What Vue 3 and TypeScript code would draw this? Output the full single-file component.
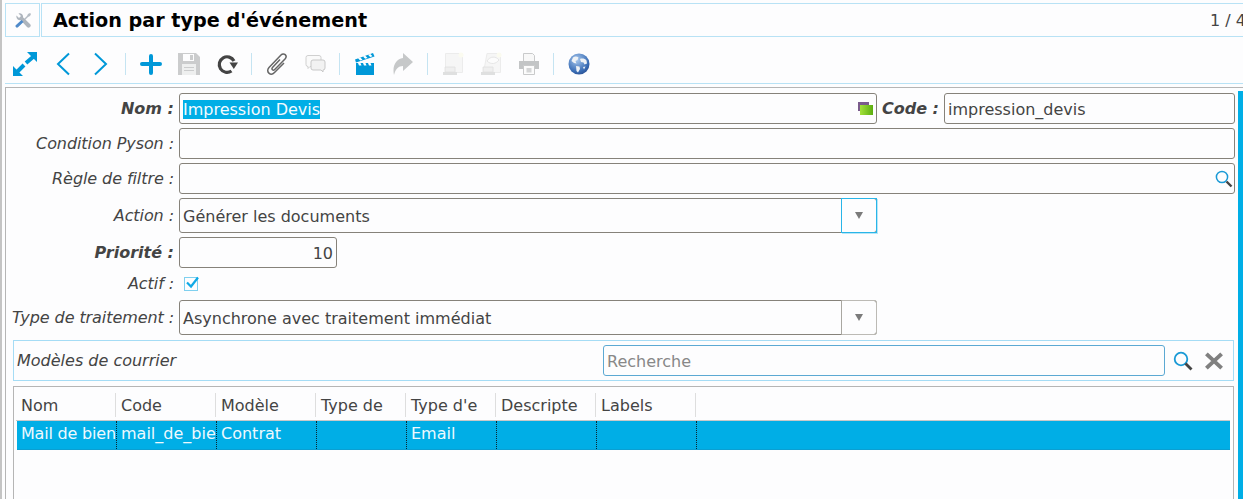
<script setup lang="ts">
const columns = [
  { name: 'Nom', width: 100, value: 'Mail de bien' },
  { name: 'Code', width: 100, value: 'mail_de_bie' },
  { name: 'Modèle', width: 100, value: 'Contrat' },
  { name: 'Type de', width: 90, value: '' },
  { name: "Type d'e", width: 90, value: 'Email' },
  { name: 'Descripte', width: 100, value: '' },
  { name: 'Labels', width: 100, value: '' },
]
</script>

<template>
  <div class="page">
    <header class="titlebar">
      <div class="tab-icon">
        <svg width="16" height="16" viewBox="0 0 16 16">
          <path d="M8 8l4-4 1-2 2-1 1 1-1 2-2 1-4 4z" fill="#b5bcc4"/>
          <path d="M1.500 3.500l2.500 2.500 2-2-2.500-2.500c2.500-.8 5 1 4.500 3.800L15 12a2 2 0 0 1-3 3L5.800 8.300C3 8.800.8 6 1.500 3.500z" fill="#aeb5bd"/>
          <path d="M1 13l5.500-5 2 2L3 15.200a1.400 1.400 0 0 1-2-2.200z" fill="#4f8aca"/>
        </svg>
      </div>
      <div class="title-box">
        <h1>Action par type d'événement</h1>
        <span class="count">1 / 4</span>
      </div>
    </header>

    <nav class="toolbar">
      <button class="tool">
        <svg width="26" height="26" viewBox="0 0 26 26"><path d="M25 1v10l-10-10zM1 25V15l10 10z" fill="#0098d8"/><path d="M14 12l7-6M5 21l7-7" stroke="#0098d8" stroke-width="4"/></svg>
      </button>
      <button class="tool">
        <svg width="16" height="24" viewBox="0 0 16 24"><path d="M14 1.500L3 12l11 10.500" fill="none" stroke="#0098d8" stroke-width="2"/></svg>
      </button>
      <button class="tool">
        <svg width="16" height="24" viewBox="0 0 16 24"><path d="M2 1.500L13 12 2 22.500" fill="none" stroke="#0098d8" stroke-width="2"/></svg>
      </button>
      <span class="sep"></span>
      <button class="tool">
        <svg width="24" height="22" viewBox="0 0 24 22"><path d="M3 11h18M12 3v17" fill="none" stroke="#0098d8" stroke-width="4" stroke-linecap="round"/></svg>
      </button>
      <button class="tool">
        <svg width="22" height="22" viewBox="0 0 22 22"><path d="M0 0h18l4 4v18H0z" fill="#cbcccd"/><path d="M5 1h11v7H5z" fill="#fdfdfe"/><path d="M12 2h3v5h-3z" fill="#cbcccd"/><path d="M4 11h14v11H4z" fill="#eeefef"/><path d="M6 14h10v1H6zM6 17h10v1H6z" fill="#cbcccd"/></svg>
      </button>
      <button class="tool">
        <svg width="22" height="22" viewBox="0 0 22 22"><path d="M15.500 18A7.800 7.800 0 1 1 18 8" fill="none" stroke="#444" stroke-width="3.200"/><path d="M13.500 9.500H22l-4.200 6.500z" fill="#444"/></svg>
      </button>
      <span class="sep"></span>
      <button class="tool">
        <svg width="24" height="24" viewBox="0 0 24 24"><path d="M15 7.500L7.500 15.500c-1.500 1.800.6 3.600 2.200 2L20 7c3-3.300-1.200-7-4-4L4 15.500c-3.800 4.200 1.700 9 5.500 5L19 11" fill="none" stroke="#666" stroke-width="1.500"/></svg>
      </button>
      <button class="tool">
        <svg width="22" height="20" viewBox="0 0 22 20"><path d="M4 1.500h11a2 2 0 0 1 2 2v7a2 2 0 0 1-2 2H6l-2 2v-2a2 2 0 0 1-2-2v-7a2 2 0 0 1 2-2z" fill="#fafafa" stroke="#d0d0d0"/><path d="M9 6h10a2 2 0 0 1 2 2v6a2 2 0 0 1-2 2v2l-2-2H9a2 2 0 0 1-2-2V8a2 2 0 0 1 2-2z" fill="#f2f2f2" stroke="#c8c8c8"/></svg>
      </button>
      <span class="sep"></span>
      <button class="tool">
        <svg width="20" height="22" viewBox="0 0 20 22"><path d="M0 6.500L18 0l1.500 3.500L1 9.500z" fill="#0098d8"/><path d="M3 5.300l2.300-.8 2.200 2.300-2.300.8zM8 3.500l2.300-.8 2.200 2.300-2.300.8zM13 1.800l2.300-.8 2.200 2.300-2.300.8z" fill="#fff"/><path d="M1 10h18v12H1z" fill="#0098d8"/><path d="M3 10h2.500l1 2.500H4zM8 10h2.500l1 2.500H9zM13 10h2.500l1 2.500H14z" fill="#fff"/></svg>
      </button>
      <button class="tool">
        <svg width="20" height="22" viewBox="0 0 20 22"><path d="M10 0l10 9-10 9v-5C5.500 13 2.500 16 1 22-1 13 3 6 10 5z" fill="#c6c8c9"/></svg>
      </button>
      <span class="sep"></span>
      <button class="tool">
        <svg width="24" height="24" viewBox="0 0 24 24"><path d="M4.500 1.500h17v19h-17z" fill="#f6f6f6" stroke="#ececec"/><circle cx="20" cy="3" r="2.500" fill="#fbfbf0"/><path d="M2 20h14v3H2z" fill="#dfe0e0"/><path d="M4 15h10v5H4z" fill="#efefef" stroke="#e0e0e0" stroke-width=".8"/></svg>
      </button>
      <button class="tool">
        <svg width="24" height="24" viewBox="0 0 24 24"><path d="M8 1.500h13.500v19H4.500z" fill="#f6f6f6" stroke="#ececec"/><path d="M8 9c3-5 9-5 12-1-3 4-8 5-12 1z" fill="#fcfcfc" stroke="#e6e6e6"/><circle cx="20" cy="3" r="2.500" fill="#fbfbf0"/><path d="M2 20h14v3H2z" fill="#dfe0e0"/><path d="M4 15h10v5H4z" fill="#efefef" stroke="#e0e0e0" stroke-width=".8"/></svg>
      </button>
      <button class="tool">
        <svg width="22" height="22" viewBox="0 0 22 22"><path d="M5.500 .5h9l2 2v6h-11z" fill="#f8f8f8" stroke="#c9cacb"/><path d="M1 8h20v8H1z" fill="#c3c5c6"/><path d="M5.500 12.500h11v9h-11z" fill="#fcfcfc" stroke="#c9cacb"/><path d="M8.500 15h5v4.500h-5z" fill="#d5d6d7"/></svg>
      </button>
      <span class="sep"></span>
      <button class="tool">
        <svg width="22" height="22" viewBox="0 0 22 22">
          <defs><radialGradient id="g" cx=".4" cy=".3" r=".8"><stop offset="0" stop-color="#a9c9ee"/><stop offset=".7" stop-color="#3a6db5"/><stop offset="1" stop-color="#25488a"/></radialGradient></defs>
          <circle cx="11" cy="11" r="10.500" fill="url(#g)"/>
          <path d="M5 4.500c2-1.500 4-1 5.500 0l-1 2.500-2 1 1 2.500-2.500-.5L3.500 8zM12 6c2-1 5-.5 6.500 1.500l.5 3-2.500 1-1-2-2.500-.5zM8 13l3.500.5L12 16l-2 3.500L8.500 18zM15 14l2.500-.5-1.500 3z" fill="#eef2f6"/>
        </svg>
      </button>
    </nav>

    <main class="panel">
      <section class="form">
        <label class="lbl req">Nom :</label>
        <div class="field translatable">
          <span class="sel">Impression Devis</span>
          <svg class="trans" width="16" height="14" viewBox="0 0 16 14">
            <defs><linearGradient id="gr" x1="0" y1="0" x2="1" y2="0"><stop offset="0" stop-color="#a4e23a"/><stop offset="1" stop-color="#5cae10"/></linearGradient></defs>
            <rect x="0" y="0" width="11" height="9" fill="#7a5b8c"/><rect x="2" y="3" width="13" height="10" fill="url(#gr)"/>
          </svg>
        </div>
        <label class="lbl req">Code :</label>
        <div class="field">impression_devis</div>

        <label class="lbl">Condition Pyson :</label>
        <div class="field wide"></div>

        <label class="lbl">Règle de filtre :</label>
        <div class="field wide with-icon">
          <svg class="mag-small" width="18" height="18" viewBox="0 0 18 18"><circle cx="7" cy="7" r="5.600" fill="none" stroke="#1a9ad6" stroke-width="1.500"/><path d="M11.500 11.500l5 5" stroke="#444" stroke-width="2.400"/></svg>
        </div>

        <label class="lbl">Action :</label>
        <div class="select focused"><span>Générer les documents</span><i class="arrow"></i></div>
        <div class="rest"></div>

        <label class="lbl req">Priorité :</label>
        <div class="number">10</div>
        <div class="rest"></div>

        <label class="lbl">Actif :</label>
        <div class="check-cell">
          <svg width="16" height="16" viewBox="0 0 16 16"><rect x=".5" y="1.500" width="13" height="13" fill="none" stroke="#7fd0ef"/><path d="M3 6.500l4 4 7-9" fill="none" stroke="#0fa9e6" stroke-width="2.200"/></svg>
        </div>
        <div class="rest"></div>

        <label class="lbl">Type de traitement :</label>
        <div class="select"><span>Asynchrone avec traitement immédiat</span><i class="arrow"></i></div>
        <div class="rest"></div>
      </section>

      <section class="o2m">
        <div class="o2m-bar">
          <span class="o2m-title">Modèles de courrier</span>
          <div class="search">Recherche</div>
          <svg class="mag" width="20" height="20" viewBox="0 0 20 20"><circle cx="8" cy="8" r="6.300" fill="none" stroke="#1a9ad6" stroke-width="1.800"/><path d="M12.500 12.500l6 6" stroke="#444" stroke-width="2.800"/></svg>
          <svg class="close" width="20" height="20" viewBox="0 0 20 20"><path d="M2.400 2.900l15.200 14.200M17.600 2.900L2.400 17.100" stroke="#808080" stroke-width="4"/></svg>
        </div>
        <div class="grid-box">
          <div class="grid-head">
            <div v-for="c in columns" :key="c.name" class="th" :style="{ width: c.width + 'px' }">{{ c.name }}</div>
          </div>
          <div class="grid-row">
            <div v-for="c in columns" :key="c.name" class="td" :style="{ width: c.width + 'px' }">{{ c.value }}</div>
          </div>
        </div>
      </section>
      <div class="scrollbar"></div>
    </main>
  </div>
</template>

<style>
html, body { margin: 0; background: #fdfdfe; overflow: hidden; }
</style>

<style scoped>
.page {
  width: 1243px;
  height: 499px;
  box-sizing: border-box;
  overflow: hidden;
  border-left: 2px solid #c4c4c4;
  padding: 3px 0 0 3px;
  font: 16px "DejaVu Sans", sans-serif;
  color: #444;
  background: #fdfdfe;
}
.titlebar { display: flex; gap: 1px; height: 34px; }
.tab-icon, .title-box {
  box-sizing: border-box;
  border: 1px solid #b8e2f5;
  height: 34px;
}
.tab-icon { width: 35px; display: flex; align-items: center; justify-content: center; }
.title-box {
  flex: 1;
  display: flex;
  align-items: center;
  justify-content: space-between;
  padding-left: 11px;
  border-right: 0;
  min-width: 0;
}
h1 { margin: 0; font-size: 19.2px; font-weight: 700; color: #000; white-space: nowrap; }
.count { color: #444; white-space: nowrap; margin-right: -3px; }
.toolbar {
  box-sizing: border-box;
  display: flex;
  align-items: center;
  height: 47px;
  padding: 7px 0 0 1px;
  border-bottom: 1px solid #b8e2f5;
}
.tool {
  width: 38px;
  height: 38px;
  flex: none;
  padding: 0;
  border: 0;
  background: transparent;
  display: flex;
  align-items: center;
  justify-content: center;
}
.sep { width: 1px; height: 22px; background: #c5e4f2; margin: 0 6px 0 5px; flex: none; }
.panel {
  position: relative;
  margin-top: 3px;
  box-sizing: border-box;
  height: 412px;
  border-left: 1px solid #b5b5b5;
  border-top: 1px solid #b5b5b5;
  padding: 5px 0 0 7px;
}
.form {
  display: grid;
  grid-template-columns: 173px 698px 67px 291px;
  grid-template-rows: 31px 31px 31px 35px 31px 24px 35px;
  row-gap: 4px;
  margin-left: -7px;
}
.lbl {
  display: flex;
  align-items: center;
  justify-content: flex-end;
  padding-right: 5px;
  padding-bottom: 1px;
  font-style: italic;
  letter-spacing: -0.08px;
  white-space: nowrap;
}
.lbl.req { font-weight: 700; letter-spacing: 0; }
.field, .select, .number {
  box-sizing: border-box;
  border: 1px solid #86827a;
  border-radius: 3px;
  display: flex;
  align-items: center;
  padding: 2px 3px 0;
  background: #fdfdfe;
  white-space: nowrap;
}
.wide { grid-column: 2 / 5; }
.translatable { position: relative; }
.sel { background: #00aee6; color: #f4fbff; line-height: 19px; margin-right: auto; }
.trans { position: absolute; right: 2px; top: 8px; }
.with-icon { position: relative; }
.mag-small { position: absolute; right: 1px; top: 6px; }
.select { position: relative; grid-column: 2; }
.select span { flex: 1; }
.arrow {
  position: absolute;
  right: -1px;
  top: -1px;
  bottom: -1px;
  width: 36px;
  box-sizing: border-box;
  border: 1px solid #bcbab5;
  border-left-color: #a9a7a1;
  border-radius: 0 3px 3px 0;
}
.arrow::after {
  content: "";
  position: absolute;
  left: 13px;
  top: 13px;
  border: 4px solid transparent;
  border-top: 7px solid #7b7b7b;
  border-bottom: 0;
}
.focused .arrow { border: 1px solid #29b5e8; border-radius: 0; box-shadow: 1px 1px 0 #b5e6f8; }
.number { grid-column: 2; width: 158px; justify-content: flex-end; }
.rest { grid-column: 3 / 5; }
.check-cell { grid-column: 2; display: flex; align-items: center; padding-left: 5px; padding-bottom: 1px; }
.o2m { width: 1221px; margin-top: 5px; }
.o2m-bar {
  box-sizing: border-box;
  height: 41px;
  border: 1px solid #a5dcf5;
  display: flex;
  align-items: center;
  padding-left: 3px;
}
.o2m-title { width: 586px; font-style: italic; flex: none; }
.search {
  box-sizing: border-box;
  width: 562px;
  height: 31px;
  flex: none;
  border: 1px solid #5ca9d3;
  border-radius: 3px;
  display: flex;
  align-items: center;
  padding: 2px 0 0 3px;
  color: #888;
}
.mag { margin-left: 8px; flex: none; }
.close { margin-left: 11px; flex: none; }
.grid-box {
  box-sizing: border-box;
  margin-top: 5px;
  height: 120px;
  border: 1px solid #b5b5b5;
  padding: 6px 3px 0;
}
.grid-head { box-sizing: border-box; display: flex; height: 28px; margin-left: -1px; padding-bottom: 3px; border-bottom: 1px solid #c9c9c9; align-items: flex-start; }
.th {
  box-sizing: border-box;
  flex: none;
  height: 24px;
  line-height: 25px;
  padding-left: 5px;
  border-right: 1px solid #dedede;
  overflow: hidden;
  white-space: nowrap;
}
.grid-row { display: flex; height: 29px; background: #00aee6; border-bottom: 1px solid #0a9fd2; color: #eef9fe; box-sizing: border-box; }
.td {
  box-sizing: border-box;
  flex: none;
  padding-left: 4px;
  line-height: 26px;
  border-right: 1px dotted #0b2733;
  overflow: hidden;
  white-space: nowrap;
}
.td:first-child { letter-spacing: -0.2px; }
.scrollbar { position: absolute; right: 0; top: 3px; bottom: 0; width: 5px; background: #00aee6; }
</style>
